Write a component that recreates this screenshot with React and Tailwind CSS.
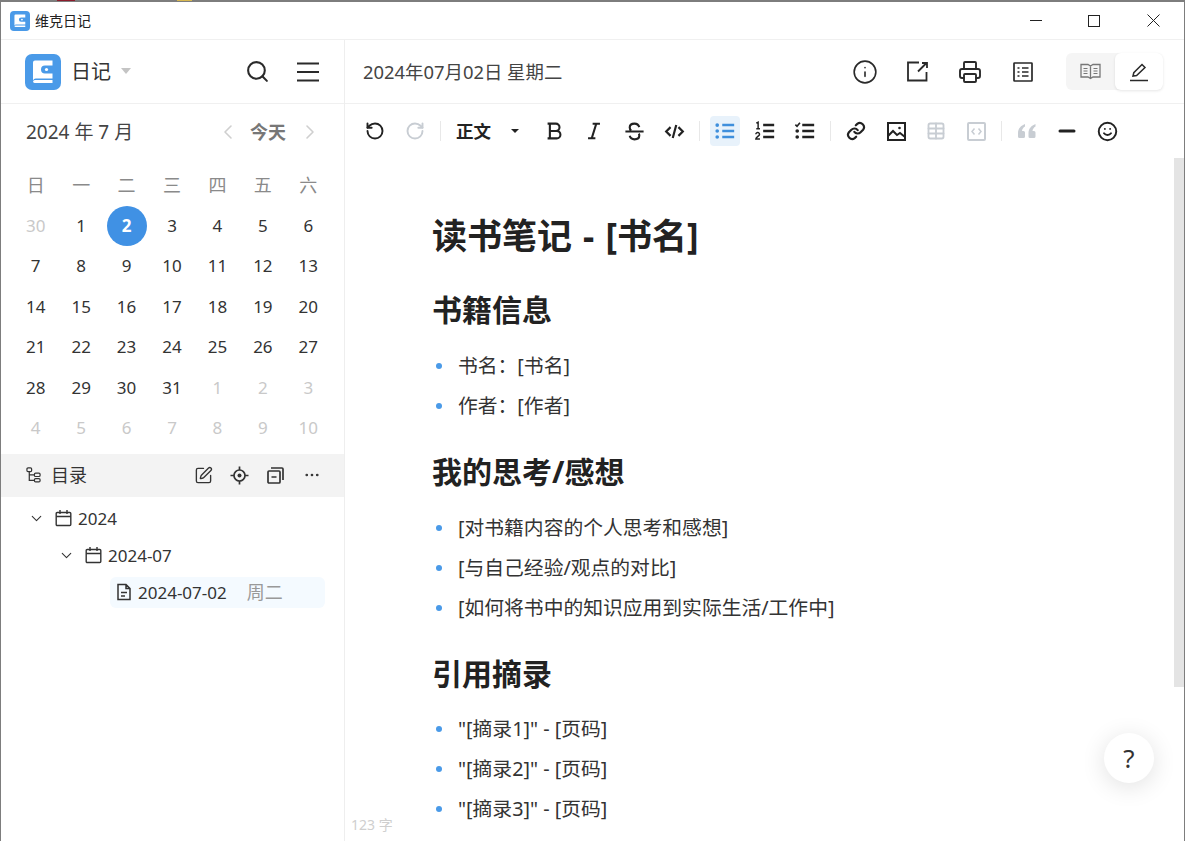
import {
  ChevronDown, ChevronLeft, ChevronRight, Ellipsis, Info, Minus, Printer, RotateCcw, RotateCw,
  Search, Smile, SquarePen, Table,
} from "lucide-react";

const FONT = { fontFamily: '"Noto Sans", "Noto Sans CJK SC", sans-serif' };

const WEEK = ["日", "一", "二", "三", "四", "五", "六"];
const DAYS = [
  [30, 1, 2, 3, 4, 5, 6],
  [7, 8, 9, 10, 11, 12, 13],
  [14, 15, 16, 17, 18, 19, 20],
  [21, 22, 23, 24, 25, 26, 27],
  [28, 29, 30, 31, 1, 2, 3],
  [4, 5, 6, 7, 8, 9, 10],
];

function Logo({ size }) {
  return (
    <svg width={size} height={size} viewBox="0 0 36 36">
      <rect width="36" height="36" rx="7" fill="#4a9ae8" />
      <path d="M8 8.500a2 2 0 0 1 2-2h17.500v5H20a4 4 0 0 0 0 8h7.500v5H11a3 3 0 0 0-3 2z" fill="#fff" />
      <circle cx="21.500" cy="15.500" r="1.600" fill="#fff" />
      <path d="M8 27.500a2 2 0 0 1 2-1.500h17.500v3H10a2 2 0 0 1-2-1.500z" fill="#fff" />
    </svg>
  );
}

function Ico({ children, size = 21, sw = 2.4 }) {
  return (
    <svg width={size} height={size} viewBox="0 0 24 24" fill="none" stroke="currentColor" strokeWidth={sw}>
      {children}
    </svg>
  );
}

function ToolBtn({ children, muted, active }) {
  return (
    <div className={`flex h-[30px] w-10 items-center justify-center ${muted ? "text-[#c8cdd3]" : "text-[#222]"}`}>
      <div className={`flex h-[30px] w-[30px] items-center justify-center rounded ${active ? "bg-[#e8f2fb] text-[#3f8fdc]" : ""}`}>
        {children}
      </div>
    </div>
  );
}

function Sep() {
  return <div className="mx-[5px] h-[20px] w-px bg-[#e8e8e8]" />;
}

function Bullet({ children }) {
  return (
    <li className="flex h-10 items-center text-[19.800px] text-[#333]">
      <span className="mr-4 ml-1 h-[6px] w-[6px] rounded-full bg-[#4a9ae8]" />
      {children}
    </li>
  );
}

function Heading({ children, className }) {
  return <h2 className={`flex h-10 items-center text-[30px] font-bold text-[#222] ${className}`}>{children}</h2>;
}

function Calendar() {
  return (
    <div className="flex flex-col pt-[7px] pr-[13px] pl-3">
      <div className="grid h-[40.6px] grid-cols-7 text-[18px] text-[#8a8a8a]">
        {WEEK.map((w) => (
          <div key={w} className="flex items-center justify-center">{w}</div>
        ))}
      </div>
      {DAYS.map((row, r) => (
        <div key={r} className="grid h-[40.4px] grid-cols-7 text-[17px] text-[#333]">
          {row.map((d, i) => {
            const faded = (r === 0 && d === 30) || (r === 4 && d < 10) || r === 5;
            const today = r === 0 && d === 2;
            return (
              <div key={i} className="flex items-center justify-center">
                {today ? (
                  <span className="flex h-10 w-10 items-center justify-center rounded-full bg-[#4091e4] font-bold text-white">{d}</span>
                ) : (
                  <span className={faded ? "text-[#c9c9c9]" : ""}>{d}</span>
                )}
              </div>
            );
          })}
        </div>
      ))}
    </div>
  );
}

function CalIcon({ className }) {
  return (
    <svg className={className} width="17" height="18" viewBox="0 0 17 18" fill="none" stroke="currentColor" strokeWidth="1.400">
      <rect x="1.200" y="3.500" width="14.600" height="13" rx="1" />
      <path d="M1.200 7.500h14.600M5 1v4M12 1v4" />
    </svg>
  );
}

function Sidebar() {
  return (
    <aside className="flex w-[344px] shrink-0 flex-col border-r border-[#eeeeee]">
      <div className="flex h-[64px] items-center border-b border-[#f0f0f0] pr-[25px] pl-6">
        <Logo size={36} />
        <span className="ml-[10px] text-[20px] text-[#333]">日记</span>
        <span className="mt-[-2px] ml-[10px] h-0 w-0 border-x-[5px] border-t-[6px] border-x-transparent border-t-[#c4c4c4]" />
        <div className="ml-auto flex items-center gap-[27px] text-[#2a2a2a]">
          <Search size={25} strokeWidth={2} />
          <svg width="22" height="20" viewBox="0 0 22 20" stroke="currentColor" strokeWidth="2">
            <path d="M0 1.500h22M0 10h22M0 18.500h22" />
          </svg>
        </div>
      </div>
      <div className="flex h-[54px] items-center pt-[2px] pr-[22px] pl-[25px]">
        <span className="text-[19px] text-[#444]">2024 年 7 月</span>
        <ChevronLeft className="ml-auto text-[#cfcfcf]" size={24} strokeWidth={1.600} />
        <span className="mr-3 ml-[10px] text-[18px] font-bold text-[#777]">今天</span>
        <ChevronRight className="text-[#cfcfcf]" size={24} strokeWidth={1.600} />
      </div>
      <Calendar />
      <div className="mt-[6px] flex h-[43px] items-center bg-[#f3f3f3] pr-[23px] pl-[25px] text-[#333]">
        <svg width="15" height="18" viewBox="0 0 16 18" fill="none" stroke="currentColor" strokeWidth="1.300">
          <rect x="1" y="1.500" width="5" height="4" rx="1.200" />
          <rect x="9" y="7" width="6" height="3.600" rx="1.200" />
          <rect x="9" y="12.800" width="6" height="3.600" rx="1.200" />
          <path d="M3.500 5.500v9.200H9M3.500 8.800H9" />
        </svg>
        <span className="ml-[10px] text-[18px]">目录</span>
        <div className="ml-auto flex items-center gap-[17px]">
          <SquarePen size={19} strokeWidth={1.700} />
          <svg width="19" height="19" viewBox="0 0 19 19" fill="none" stroke="currentColor" strokeWidth="1.700">
            <circle cx="9.500" cy="9.500" r="5.500" />
            <circle cx="9.500" cy="9.500" r="2" fill="currentColor" stroke="none" />
            <path d="M9.500 0.500v3.500M9.500 15v3.500M0.500 9.500H4M15 9.500h3.500" />
          </svg>
          <svg width="19" height="19" viewBox="0 0 19 19" fill="none" stroke="currentColor" strokeWidth="1.700">
            <rect x="2" y="5" width="12" height="12" rx="1" />
            <path d="M5 2h11a1 1 0 0 1 1 1v11M5.500 11h5" />
          </svg>
          <Ellipsis className="ml-px" size={18} strokeWidth={1.600} />
        </div>
      </div>
      <div className="flex flex-col pt-[3px] text-[17px] text-[#333]">
        <div className="flex h-[37px] items-center pl-[27px]">
          <ChevronDown size={17} strokeWidth={1.500} />
          <CalIcon className="ml-[10px]" />
          <span className="ml-[6px]">2024</span>
        </div>
        <div className="flex h-[37px] items-center pl-[57px]">
          <ChevronDown size={17} strokeWidth={1.500} />
          <CalIcon className="ml-[10px]" />
          <span className="ml-[6px]">2024-07</span>
        </div>
        <div className="mt-[3px] ml-[109px] flex h-[31px] w-[215px] items-center rounded-md bg-[#f4faff] pl-[6px]">
          <svg width="16" height="18" viewBox="0 0 16 18" fill="none" stroke="currentColor" strokeWidth="1.500">
            <path d="M2 1.500h8l4 4v11H2zM10 1.500v4h4M5 9.500h6M5 13h4" />
          </svg>
          <span className="ml-[6px]">2024-07-02</span>
          <span className="ml-[20px] text-[18px] text-[#999]">周二</span>
        </div>
      </div>
    </aside>
  );
}

function HeadIcon({ children }) {
  return <div className="flex w-[52.500px] items-center justify-center">{children}</div>;
}

function Header() {
  return (
    <div className="flex h-[64px] items-center border-b border-[#f0f0f0] pr-[21px] pl-[18px]">
      <span className="text-[18.400px] text-[#444]">2024年07月02日 星期二</span>
      <div className="ml-auto flex items-center text-[#2a2a2a]">
        <HeadIcon><Info size={26} strokeWidth={1.500} /></HeadIcon>
        <HeadIcon>
          <svg width="21" height="21" viewBox="0 0 21 21" fill="none" stroke="currentColor" strokeWidth="1.800">
            <path d="M12 1.500H1v18h18.500V11" />
            <path d="M11 10.500l8-8M15 2h5v5" />
          </svg>
        </HeadIcon>
        <HeadIcon><Printer size={24} strokeWidth={1.900} /></HeadIcon>
        <HeadIcon>
          <svg width="20" height="20" viewBox="0 0 20 20" fill="none" stroke="currentColor" strokeWidth="1.700">
            <rect x="1" y="1" width="18" height="18" rx="0.500" />
            <path d="M9 6h6.500M9 10h6.500M9 14h6.500M4.500 6h2M4.500 10h2M4.500 14h2" />
          </svg>
        </HeadIcon>
        <div className="ml-[17px] flex h-[37px] w-[97px] rounded-md bg-[#f5f5f5]">
          <div className="flex w-[49px] items-center justify-center text-[#777]">
            <svg width="21" height="17" viewBox="0 0 21 17" fill="none" stroke="currentColor" strokeWidth="1.300">
              <path d="M1 1.500h7l2.500 1.500L13 1.500h7v12.500h-7L10.500 15.500 8 14H1zM10.500 3v12.500" />
              <path d="M3.500 5.500h4M3.500 8h4M3.500 10.500h4M13.500 5.500h4M13.500 8h4M13.500 10.500h4" strokeWidth="1" />
            </svg>
          </div>
          <div className="flex w-[48px] items-center justify-center rounded-md bg-white shadow-[0_1px_3px_rgba(0,0,0,0.1)]">
            <svg width="20" height="20" viewBox="0 0 20 20" fill="none" stroke="currentColor" strokeWidth="1.500">
              <path d="M4 14l.800-3.300L13 2.500l3 3L7.600 13.500zM1 18.500h18" />
            </svg>
          </div>
        </div>
      </div>
    </div>
  );
}

function Toolbar() {
  return (
    <div className="flex h-[54px] shrink-0 items-center pl-[10px]">
      <ToolBtn><RotateCcw size={20} strokeWidth={2.300} /></ToolBtn>
      <ToolBtn muted><RotateCw size={20} strokeWidth={2.300} /></ToolBtn>
      <Sep />
      <div className="ml-[10px] flex w-[78px] items-center text-[#222]">
        <span className="text-[17.500px] font-bold">正文</span>
        <span className="ml-[20px] h-0 w-0 border-x-[4px] border-t-[4px] border-x-transparent border-t-[#222]" />
      </div>
      <ToolBtn>
        <Ico size={22} sw={2.300}>
          <path d="M5 4h9a4 4 0 0 1 0 8H7.500M7.500 4v16M7.500 12h7.500a4 4 0 0 1 0 8H5" />
        </Ico>
      </ToolBtn>
      <ToolBtn>
        <Ico size={22} sw={2.200}>
          <path d="M10.500 4h8M5.500 20h8M14.500 4l-5 16" />
        </Ico>
      </ToolBtn>
      <ToolBtn>
        <Ico size={23} sw={2.200}>
          <path d="M17 7.500C16.200 5 14.200 3.800 12 3.800c-3 0-5 1.700-5 4 0 1.300.5 2.300 1.500 3.200M2.500 12h19M7 16.500c.7 2.400 2.800 3.700 5 3.700 3 0 5-1.700 5-4 0-.8-.2-1.500-.5-2" />
        </Ico>
      </ToolBtn>
      <ToolBtn>
        <Ico size={21} sw={2.500}>
          <path d="M7.500 7l-5 5 5 5M16.500 7l5 5-5 5M14 4.500l-4 15" />
        </Ico>
      </ToolBtn>
      <Sep />
      <ToolBtn active>
        <Ico size={22} sw={2.600}>
          <path d="M9 5.500h13M9 12h13M9 18.500h13" />
          <g fill="currentColor" stroke="none">
            <circle cx="3.500" cy="5.500" r="2" />
            <circle cx="3.500" cy="12" r="2" />
            <circle cx="3.500" cy="18.500" r="2" />
          </g>
        </Ico>
      </ToolBtn>
      <ToolBtn>
        <Ico size={22} sw={2.600}>
          <path d="M10 5.500h12M10 12h12M10 18.500h12" />
          <path d="M2.500 3.500L4.500 2.500v7M2.500 9.500h4M2 15.500a2 2 0 0 1 4 .3c0 1.500-4 3-4 5h4.500" strokeWidth="1.600" />
        </Ico>
      </ToolBtn>
      <ToolBtn>
        <Ico size={22} sw={2.600}>
          <path d="M9 5.500h13M9 12h13M9 18.500h13" />
          <path d="M1.500 5l1.800 1.800L6.500 3" strokeWidth="1.800" />
          <g fill="currentColor" stroke="none">
            <circle cx="3.500" cy="12" r="2" />
            <circle cx="3.500" cy="18.500" r="2" />
          </g>
        </Ico>
      </ToolBtn>
      <Sep />
      <ToolBtn>
        <svg width="20" height="20" viewBox="0 0 24 24" fill="none" stroke="currentColor" strokeWidth="2.600" strokeLinecap="round">
          <path d="M10 13a5 5 0 0 0 7.500.5l3-3a5 5 0 0 0-7-7l-1.700 1.700" />
          <path d="M14 11a5 5 0 0 0-7.500-.5l-3 3a5 5 0 0 0 7 7l1.700-1.700" />
        </svg>
      </ToolBtn>
      <ToolBtn>
        <svg width="19" height="19" viewBox="0 0 19 19" fill="none" stroke="currentColor" strokeWidth="2">
          <rect x="1" y="1" width="17" height="17" />
          <path d="M1 14l5-5 4 4 3-2 5 4" />
          <circle cx="12.500" cy="6" r="1.300" fill="currentColor" stroke="none" />
        </svg>
      </ToolBtn>
      <ToolBtn muted><Table size={20} strokeWidth={2.200} /></ToolBtn>
      <ToolBtn muted>
        <svg width="19" height="19" viewBox="0 0 19 19" fill="none" stroke="currentColor" strokeWidth="2">
          <rect x="1" y="1" width="17" height="17" rx="1" />
          <path d="M7.500 6.500L5 9.500l2.500 3M11.500 6.500l2.500 3-2.500 3" strokeWidth="1.500" />
        </svg>
      </ToolBtn>
      <Sep />
      <ToolBtn muted>
        <svg width="20" height="16" viewBox="0 0 20 16" fill="currentColor">
          <path d="M8 1C4 2.500 1 5.500 1 10v3.500a1.500 1.500 0 0 0 1.500 1.500h4A1.500 1.500 0 0 0 8 13.500v-4A1.500 1.500 0 0 0 6.500 8H5c.2-2 1.300-3.500 3-4.500zM18.500 1c-4 1.500-7 4.500-7 9v3.500a1.500 1.500 0 0 0 1.500 1.500h4a1.500 1.500 0 0 0 1.500-1.500v-4A1.500 1.500 0 0 0 17 8h-1.500c.2-2 1.300-3.500 3-4.500z" />
        </svg>
      </ToolBtn>
      <ToolBtn><Minus size={24} strokeWidth={3} /></ToolBtn>
      <ToolBtn><Smile size={21} strokeWidth={2.200} /></ToolBtn>
    </div>
  );
}

function Document() {
  return (
    <div className="relative flex min-h-0 flex-1 overflow-hidden">
      <div className="flex-1 pt-[54px] pl-[87px]">
        <h1 className="flex h-[48px] items-center text-[35px] font-bold text-[#222] [word-spacing:2px]">读书笔记 - [书名]</h1>
        <Heading className="mt-[29px] mb-[17px]">书籍信息</Heading>
        <ul>
          <Bullet>书名：[书名]</Bullet>
          <Bullet>作者：[作者]</Bullet>
        </ul>
        <Heading className="mt-[25px] mb-[17px]">我的思考/感想</Heading>
        <ul>
          <Bullet>[对书籍内容的个人思考和感想]</Bullet>
          <Bullet>[与自己经验/观点的对比]</Bullet>
          <Bullet>[如何将书中的知识应用到实际生活/工作中]</Bullet>
        </ul>
        <Heading className="mt-[25px] mb-4">引用摘录</Heading>
        <ul>
          <Bullet>"[摘录1]" - [页码]</Bullet>
          <Bullet>"[摘录2]" - [页码]</Bullet>
          <Bullet>"[摘录3]" - [页码]</Bullet>
        </ul>
      </div>
      {/* scrollbar */}
      <div className="w-[10px] shrink-0">
        <div className="h-[529px] bg-[#e4e4e4]" />
      </div>
      <span className="absolute top-[656px] left-[6px] text-[14px] text-[#cfcfcf]">123 字</span>
      <div className="absolute top-[575px] left-[759px] flex h-[50px] w-[50px] items-center justify-center rounded-full bg-white text-[26px] text-[#333] shadow-[0_4px_24px_rgba(0,0,0,0.12)]">
        ?
      </div>
    </div>
  );
}

export default function App() {
  return (
    <div style={FONT} className="relative h-[841px] w-[1186px] overflow-hidden bg-white">
      {/* desktop showing through above the window */}
      <div className="absolute top-0 left-[57px] h-px w-[18px] bg-[#8c1c2c]" />
      <div className="absolute top-0 left-[177px] h-px w-[15px] bg-[#d8b850]" />
      <div className="flex h-full w-[1185px] flex-col border-t-2 border-r border-l border-[#7d7d7d]">
        <div className="flex h-[38px] shrink-0 items-center border-b border-[#f0f0f0] pl-[9px] text-[#222]">
          <Logo size={20} />
          <span className="ml-[5px] text-[14px]">维克日记</span>
          <div className="ml-auto flex items-center">
            <div className="flex w-[58px] justify-center">
              <span className="h-px w-3 bg-[#222]" />
            </div>
            <div className="flex w-[58px] justify-center"><span className="h-3 w-3 border border-[#222]" /></div>
            <div className="flex w-[60px] justify-center">
              <svg width="13" height="13" viewBox="0 0 13 13" stroke="#222" strokeWidth="1">
                <path d="M0.500 0.500l12 12M12.500 0.500l-12 12" />
              </svg>
            </div>
            <div className="w-px" />
          </div>
        </div>
        <div className="flex min-h-0 flex-1">
          <Sidebar />
          <main className="flex min-w-0 flex-1 flex-col">
            <Header />
            <Toolbar />
            <Document />
          </main>
        </div>
      </div>
    </div>
  );
}
